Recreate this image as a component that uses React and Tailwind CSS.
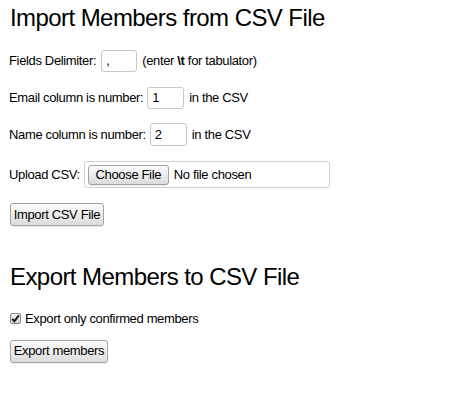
export default function App() {
  const btn =
    "inline-flex items-center justify-center border border-[#a3a3a3] rounded-[3px] bg-gradient-to-b from-[#fbfbfb] to-[#dcdcdc] text-[13px] text-black shadow-[0_1px_0_rgba(0,0,0,0.08)]";
  const field =
    "h-[22px] w-[36px] border border-[#c8c8c8] rounded-[3px] bg-white px-[4px] text-[13px] text-black flex items-center";

  return (
    <div className="w-[455px] h-[401px] bg-white px-[10px] font-['Liberation_Sans',Arial,sans-serif] text-black tracking-[-0.35px]">
      <h1 className="pt-[4px] text-[24px] leading-[28px] tracking-[-0.57px]">Import Members from CSV File</h1>

      {/* import form */}
      <div className="mt-[18px] flex items-center h-[22px] text-[13px]">
        <span className="-ml-[1px]">Fields Delimiter:</span>
        <div className={`${field} ml-[5px]`}>,</div>
        <span className="ml-[5px]">
          (enter <b>\t</b> for tabulator)
        </span>
      </div>

      <div className="mt-[15px] flex items-center h-[22px] text-[13px]">
        <span className="-ml-[1px]">Email column is number:</span>
        <div className={`${field} ml-[4px] w-[37px]`}>1</div>
        <span className="ml-[5px]">in the CSV</span>
      </div>

      <div className="mt-[14px] flex items-center h-[23px] text-[13px]">
        <span className="-ml-[1px]">Name column is number:</span>
        <div className={`${field} ml-[4px] w-[37px] h-[23px]`}>2</div>
        <span className="ml-[5px]">in the CSV</span>
      </div>

      <div className="mt-[15px] flex items-center h-[27px] text-[13px]">
        <span className="-ml-[1px]">Upload CSV:</span>
        <div className="ml-[4px] h-[27px] w-[246px] border border-[#d0d0d0] rounded-[3px] flex items-center pl-[3px]">
          <span className={`${btn} h-[20px] w-[81px]`}>Choose File</span>
          <span className="ml-[5px]">No file chosen</span>
        </div>
      </div>

      <div className="mt-[14px]">
        <span className={`${btn} h-[23px] w-[94px]`}>Import CSV File</span>
      </div>

      <h1 className="mt-[37px] text-[24px] leading-[28px] tracking-[-0.57px]">Export Members to CSV File</h1>

      <div className="mt-[21px] flex items-center h-[13px] text-[13px]">
        <span className="w-[11px] h-[11px] border border-[#8a8a8a] rounded-[2px] bg-gradient-to-b from-[#f4f4f4] to-[#d4d4d4] flex items-center justify-center">
          <svg width="9" height="9" viewBox="0 0 9 9">
            <path d="M1.2 4.8 L3.4 7.2 L7.8 1.4" fill="none" stroke="#111" strokeWidth="1.9" />
          </svg>
        </span>
        <span className="ml-[4px]">Export only confirmed members</span>
      </div>

      <div className="mt-[13px]">
        <span className={`${btn} h-[23px] w-[98px]`}>Export members</span>
      </div>
    </div>
  );
}
